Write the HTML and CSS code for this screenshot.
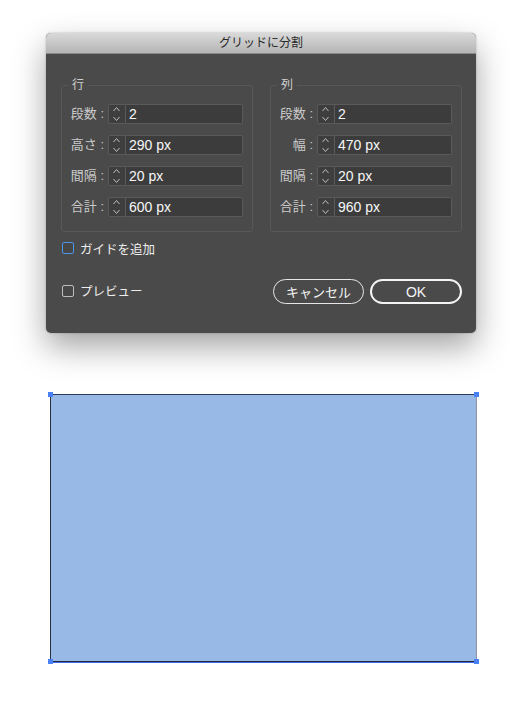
FILE: index.html
```html
<!DOCTYPE html>
<html lang="ja">
<head>
<meta charset="utf-8">
<title>グリッドに分割</title>
<link rel="stylesheet" href="styles.css">
</head>
<body>
<div class="dialog">
  <div class="titlebar">グリッドに分割</div>
  <div class="body">
    <div class="groups">
      <fieldset class="group">
        <legend>行</legend>
        <div class="row"><span class="lbl">段数 :</span><span class="spin"><svg width="18" height="20" viewBox="0 0 18 20"><path d="M5.5 7 L8.5 3.5 L11.5 7 M5.5 13 L8.5 16.5 L11.5 13" fill="none" stroke="#bdbdbd" stroke-width="1"/></svg></span><span class="val">2</span></div>
        <div class="row"><span class="lbl">高さ :</span><span class="spin"><svg width="18" height="20" viewBox="0 0 18 20"><path d="M5.5 7 L8.5 3.5 L11.5 7 M5.5 13 L8.5 16.5 L11.5 13" fill="none" stroke="#bdbdbd" stroke-width="1"/></svg></span><span class="val">290 px</span></div>
        <div class="row"><span class="lbl">間隔 :</span><span class="spin"><svg width="18" height="20" viewBox="0 0 18 20"><path d="M5.5 7 L8.5 3.5 L11.5 7 M5.5 13 L8.5 16.5 L11.5 13" fill="none" stroke="#bdbdbd" stroke-width="1"/></svg></span><span class="val">20 px</span></div>
        <div class="row"><span class="lbl">合計 :</span><span class="spin"><svg width="18" height="20" viewBox="0 0 18 20"><path d="M5.5 7 L8.5 3.5 L11.5 7 M5.5 13 L8.5 16.5 L11.5 13" fill="none" stroke="#bdbdbd" stroke-width="1"/></svg></span><span class="val">600 px</span></div>
      </fieldset>
      <fieldset class="group">
        <legend>列</legend>
        <div class="row"><span class="lbl">段数 :</span><span class="spin"><svg width="18" height="20" viewBox="0 0 18 20"><path d="M5.5 7 L8.5 3.5 L11.5 7 M5.5 13 L8.5 16.5 L11.5 13" fill="none" stroke="#bdbdbd" stroke-width="1"/></svg></span><span class="val">2</span></div>
        <div class="row"><span class="lbl">幅 :</span><span class="spin"><svg width="18" height="20" viewBox="0 0 18 20"><path d="M5.5 7 L8.5 3.5 L11.5 7 M5.5 13 L8.5 16.5 L11.5 13" fill="none" stroke="#bdbdbd" stroke-width="1"/></svg></span><span class="val">470 px</span></div>
        <div class="row"><span class="lbl">間隔 :</span><span class="spin"><svg width="18" height="20" viewBox="0 0 18 20"><path d="M5.5 7 L8.5 3.5 L11.5 7 M5.5 13 L8.5 16.5 L11.5 13" fill="none" stroke="#bdbdbd" stroke-width="1"/></svg></span><span class="val">20 px</span></div>
        <div class="row"><span class="lbl">合計 :</span><span class="spin"><svg width="18" height="20" viewBox="0 0 18 20"><path d="M5.5 7 L8.5 3.5 L11.5 7 M5.5 13 L8.5 16.5 L11.5 13" fill="none" stroke="#bdbdbd" stroke-width="1"/></svg></span><span class="val">960 px</span></div>
      </fieldset>
    </div>
    <div class="check guide"><span class="box blue"></span><span>ガイドを追加</span></div>
    <div class="footer">
      <div class="check"><span class="box"></span><span>プレビュー</span></div>
      <div class="buttons">
        <span class="btn cancel">キャンセル</span>
        <span class="btn ok">OK</span>
      </div>
    </div>
  </div>
</div>
<div class="canvas">
  <div class="rect">
    <span class="h tl"></span><span class="h tr"></span><span class="h bl"></span><span class="h br"></span>
  </div>
</div>
</body>
</html>
```
FILE: styles.css
```css
* { box-sizing: border-box; }
html, body { margin: 0; padding: 0; background: #ffffff; }
body {
  width: 528px;
  height: 703px;
  overflow: hidden;
  font-family: "Liberation Sans", "Noto Sans CJK JP", sans-serif;
  padding-top: 33px;
}
.dialog {
  margin-left: 46px;
  width: 430px;
  height: 300px;
  border-radius: 5px;
  background: #4a4a4a;
  box-shadow: 0 14px 32px rgba(0,0,0,0.36), 0 0 2px rgba(0,0,0,0.3);
  overflow: hidden;
}
.titlebar {
  height: 21px;
  background: linear-gradient(#d9d9d9, #b5b5b5);
  border-bottom: 1px solid #8a8a8a;
  color: #2a2a2a;
  font-size: 12px;
  line-height: 21px;
  text-align: center;
}
.body {
  padding: 24px 14px 0 15px;
}
.groups {
  display: flex;
  gap: 17px;
}
.group {
  width: 192px;
  margin: 0;
  border: 1px solid #585858;
  border-radius: 3px;
  padding: 12px 9px 14px 0;
  min-width: 0;
}
.group legend {
  color: #cfcfcf;
  font-size: 12px;
  padding: 0 4px;
  margin-left: 6px;
  line-height: 14px;
}
.row {
  display: flex;
  align-items: stretch;
  height: 20px;
  margin-bottom: 11px;
}
.row:last-child { margin-bottom: 0; }
.lbl {
  width: 46px;
  padding-right: 4px;
  text-align: right;
  color: #c9c9c9;
  font-size: 13px;
  line-height: 20px;
  white-space: nowrap;
}
.spin {
  width: 18px;
  height: 20px;
  border: 1px solid #5a5a5a;
  border-radius: 2px 0 0 2px;
  background: #3e3e3e;
  display: flex;
}
.spin svg { display: block; margin: -1px; }
.val {
  flex: 1;
  border: 1px solid #5a5a5a;
  border-left: none;
  border-radius: 0 2px 2px 0;
  background: #3c3c3c;
  color: #f7f7f7;
  font-size: 14px;
  line-height: 18px;
  padding-left: 3px;
}
.check {
  display: flex;
  align-items: center;
  gap: 6px;
  color: #ededed;
  font-size: 12.5px;
  margin-left: 1px;
}
.box {
  width: 12px;
  height: 12px;
  border: 1px solid #bdbdbd;
  border-radius: 2px;
  background: #474747;
}
.box.blue { border-color: #4b95e8; }
.guide {
  margin-top: 10px;
  height: 12px;
}
.footer {
  margin-top: 24px;
  display: flex;
  justify-content: space-between;
  align-items: center;
}
.footer .check { margin-top: -1px; }
.buttons {
  display: flex;
  gap: 6px;
  margin-top: 1px;
}
.btn {
  display: flex;
  align-items: center;
  justify-content: center;
  height: 25px;
  border-radius: 13px;
  color: #f4f4f4;
  font-size: 13px;
}
.cancel {
  width: 91px;
  border: 1px solid #e6e6e6;
}
.ok {
  width: 92px;
  border: 2px solid #f4f4f4;
  font-size: 14px;
}
.canvas {
  margin-top: 61px;
  padding-left: 50px;
}
.rect {
  position: relative;
  width: 427px;
  height: 268px;
  background: #98b8e6;
  border-top: 1px solid #2e3a5a;
  border-left: 1px solid #2b2f3c;
  border-right: 1px solid #8f93a3;
  border-bottom: 1px solid #22263a;
  box-shadow: 0 1px 0 #3f6ff0;
}
.h {
  position: absolute;
  width: 5px;
  height: 5px;
  background: #4a80f6;
}
.tl { left: -3px; top: -3px; }
.tr { right: -3px; top: -3px; }
.bl { left: -3px; bottom: -3px; }
.br { right: -3px; bottom: -3px; }
```
